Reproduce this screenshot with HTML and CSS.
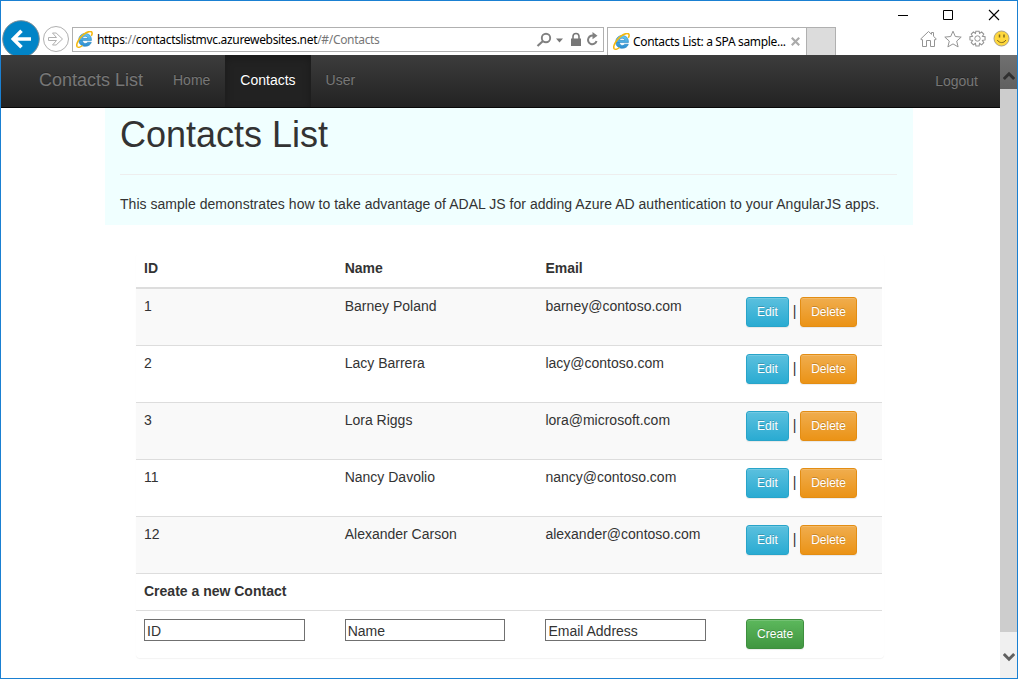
FILE: index.html
```html
<!DOCTYPE html>
<html lang="en">
<head>
<meta charset="utf-8">
<title>Contacts List: a SPA sample</title>
<link rel="stylesheet" href="styles.css">
</head>
<body>
<svg width="0" height="0" class="defs">
  <defs>
    <linearGradient id="ieBlue" x1="0" y1="0" x2="0" y2="1"><stop offset="0" stop-color="#69c9f2"/><stop offset="1" stop-color="#2b8bd0"/></linearGradient>
    <symbol id="ie" viewBox="0 0 16 16">
      <path d="M2.600 9h11.900c.3-4.200-2.200-6.600-5.800-6.600-3.600 0-6.100 2.500-6.100 6.100 0 3.700 2.600 5.900 6.100 5.900 2.900 0 5-1.400 5.700-3.800h-3.500c-.5.8-1.200 1.100-2.100 1.100-1.500 0-2.700-1-2.700-2.700M6.100 6.900c.2-1.300 1.200-2 2.500-2s2.400.7 2.500 2z" fill="url(#ieBlue)" fill-rule="evenodd" stroke="#2a87c2" stroke-width=".6"/>
      <path d="M1.300 14.900C-.7 12.800 3 6.500 7.200 3.200 10.600.5 14.300-.4 15 1.300c.4.900.1 2.100-.6 3.300" fill="none" stroke="#f4b80f" stroke-width="1.500"/>
      <path d="M1.300 14.900c1 .9 3.200.1 4.800-1.200" fill="none" stroke="#f4b80f" stroke-width="1.300"/>
    </symbol>
  </defs>
</svg>
<div class="window">
  <header class="chrome">
    <svg class="back" width="40" height="36" viewBox="0 0 40 36"><circle cx="20" cy="20" r="18.300" fill="#0184c7" stroke="#7d8d96"/><path d="M30 20H13M20.500 11.800L12.300 20l8.200 8.200" fill="none" stroke="#fff" stroke-width="3.600"/></svg>
    <svg class="forward" width="28" height="28" viewBox="0 0 28 28"><circle cx="14" cy="14" r="12.500" fill="#fff" stroke="#b0b0b0"/><path d="M6.500 12.500h8L10.500 8h3.600L20.500 14l-6.400 6h-3.600l4-4.500h-8z" fill="none" stroke="#b0b0b0"/></svg>
    <div class="address">
      <svg width="17" height="17"><use href="#ie"/></svg>
      <span class="url">https<i>://</i>contactslistmvc.azurewebsites.net<i>/#/Contacts</i></span>
      <svg class="tools" width="64" height="20" viewBox="0 0 64 20"><circle cx="10" cy="8" r="4.200" fill="none" stroke="#808080" stroke-width="1.900"/><path d="M7 11l-5.500 5" stroke="#808080" stroke-width="2.200"/><path d="M20 8.500h7l-3.500 4z" fill="#777"/><path d="M35 8.500h10v7.500H35z" fill="#777"/><path d="M37 9V6.500a3 3 0 0 1 6 0V9" fill="none" stroke="#777" stroke-width="1.600"/><path d="M58.500 6.200a4.300 4.300 0 1 0 2 4.800" fill="none" stroke="#808080" stroke-width="2"/><path d="M56.500 2l5 3.800-5 3.500z" fill="#808080"/></svg>
    </div>
    <div class="tab">
      <svg width="17" height="17"><use href="#ie"/></svg>
      <span class="tab-title">Contacts List: a SPA sample...</span>
      <svg class="tab-close" width="9" height="9" viewBox="0 0 9 9"><path d="M.8.800l7.400 7.400M8.200.800L.8 8.200" stroke="#aaa" stroke-width="2.200"/></svg>
    </div>
    <div class="new-tab"></div>
    <div class="corner">
      <svg class="controls" width="102" height="12" viewBox="0 0 102 12"><path d="M0 6.500h10M45.500 1.500h9v9h-9z" fill="none" stroke="#000"/><path d="M91 1l10 10M101 1L91 11" stroke="#000" stroke-width="1.100"/></svg>
      <svg class="icons" width="90" height="18" viewBox="0 0 90 18" fill="none" stroke="#949494"><path d="M.7 9L8.500 1.500 11.500 4.300V2.500h2v3.800L16.300 9l-1.300 1-.5-.3v6.800h-4v-6h-4v6h-4V9.700l-.5.3z"/><path d="M33 1.200l2.300 5.300 5.900.6-4.500 4 1.400 5.800-5.100-3-5.100 3 1.400-5.800-4.500-4 5.900-.6z"/><path transform="translate(57.500 8.500) scale(1.080) translate(-57 -8.200)" d="M55.500 1.500h3l.4 2 1.900-1.300 2 2-1.200 1.900 2.400.4v3l-2.400.5 1.200 2-2 2-1.900-1.200-.4 2.300h-3l-.4-2.300-1.900 1.200-2-2 1.200-2-2.400-.5v-3l2.400-.4-1.200-1.900 2-2 1.900 1.300z"/><circle cx="57.500" cy="8.500" r="2.700"/><circle cx="81.500" cy="8.500" r="7.500" fill="#ffd83d" stroke="#a9a08a"/><path d="M79.500 4.500v3M84 4.500v3" stroke="#806818" stroke-width="1.500"/><path d="M77.300 10c1.800 3.400 6.800 3.400 8.600 0" stroke="#806818"/></svg>
    </div>
  </header>
  <div class="viewport">
    <main class="page">
      <nav class="navbar">
        <a class="brand">Contacts List</a><a class="link">Home</a><a class="link active">Contacts</a><a class="link">User</a><a class="link logout">Logout</a>
      </nav>
      <section class="intro">
        <h1>Contacts List</h1>
        <hr>
        <p>This sample demonstrates how to take advantage of ADAL JS for adding Azure AD authentication to your AngularJS apps.</p>
      </section>
      <section class="panel">
        <table class="contacts">
          <thead><tr><th>ID</th><th>Name</th><th>Email</th><th></th></tr></thead>
          <tbody>
            <tr class="row"><td>1</td><td>Barney Poland</td><td>barney@contoso.com</td><td><button class="btn info">Edit</button> | <button class="btn warning">Delete</button></td></tr>
            <tr class="row"><td>2</td><td>Lacy Barrera</td><td>lacy@contoso.com</td><td><button class="btn info">Edit</button> | <button class="btn warning">Delete</button></td></tr>
            <tr class="row"><td>3</td><td>Lora Riggs</td><td>lora@microsoft.com</td><td><button class="btn info">Edit</button> | <button class="btn warning">Delete</button></td></tr>
            <tr class="row"><td>11</td><td>Nancy Davolio</td><td>nancy@contoso.com</td><td><button class="btn info">Edit</button> | <button class="btn warning">Delete</button></td></tr>
            <tr class="row"><td>12</td><td>Alexander Carson</td><td>alexander@contoso.com</td><td><button class="btn info">Edit</button> | <button class="btn warning">Delete</button></td></tr>
            <tr><th colspan="4">Create a new Contact</th></tr>
            <tr class="create"><td><input placeholder="ID"></td><td><input class="name" placeholder="Name"></td><td><input placeholder="Email Address"></td><td><button class="btn success">Create</button></td></tr>
          </tbody>
        </table>
      </section>
    </main>
    <aside class="scrollbar">
      <div class="up"><svg width="12" height="10" viewBox="0 0 12 10"><path d="M.8 8L6 2.800 11.200 8" fill="none" stroke="#303030" stroke-width="3"/></svg></div>
      <div class="thumb"></div>
      <div class="down"><svg width="12" height="10" viewBox="0 0 12 10"><path d="M.8 2L6 7.200 11.200 2" fill="none" stroke="#606060" stroke-width="3"/></svg></div>
    </aside>
  </div>
</div>
</body>
</html>
```
FILE: styles.css
```css
* { box-sizing: border-box; }
body { margin: 0; font: 14px/20px "Liberation Sans", Arial, sans-serif; color: #333; overflow: hidden; }
.defs { display: block; position: absolute; }
svg { display: block; flex: none; }
.window { width: 1018px; height: 679px; border: 1px solid #1a80d2; background: #fff; display: flex; flex-direction: column; }

.chrome { height: 54px; flex: none; display: flex; align-items: flex-start; font: 12px/16px "Noto Sans", "Open Sans", sans-serif; overflow: hidden; }
.back { margin-top: 18px; }
.forward { margin: 24px 0 0 1px; }
.address { width: 532px; height: 25px; margin: 26px 0 0 2px; border: 1px solid #b0b0b0; display: flex; align-items: center; padding-left: 3px; }
.url { color: #000; font-size: 12px; letter-spacing: -0.320px; margin-left: 4px; padding-top: 1px; white-space: nowrap; }
.url i { font-style: normal; color: #777; }
.tools { margin-left: auto; margin-right: 3px; }
.tab { width: 199px; height: 28px; margin: 26px 0 0 3px; border: 1px solid #b0b0b0; border-width: 1px 0 0 1px; display: flex; align-items: center; padding-left: 5px; }
.tab-title { color: #000; margin-left: 3px; white-space: nowrap; width: 154px; letter-spacing: -0.330px; }
.tab-close { margin-left: 4px; }
.new-tab { width: 30px; height: 28px; margin-top: 26px; background: #dcdcdc; border: 1px solid #b0b0b0; border-bottom: 0; }
.corner { width: 181px; height: 54px; padding-top: 8px; display: flex; flex-direction: column; }
.controls { margin-left: 62px; }
.icons { margin: 9px 0 0 84px; }

.viewport { flex: 1; display: flex; min-height: 0; }
.page { width: 999px; overflow: hidden; }
.navbar { height: 53px; display: flex; padding-left: 38px; background: linear-gradient(#3c3c3c, #222); border-bottom: 1px solid #080808; text-shadow: 0 -1px 0 rgba(0,0,0,.25); }
.brand { font-size: 18px; color: #777; width: 119px; line-height: 50px; }
.link { color: #777; line-height: 50px; padding: 0 15px; }
.active { background: #222; color: #fff; box-shadow: inset 0 3px 9px rgba(0,0,0,.25); }
.logout { margin-left: auto; padding-right: 22px; line-height: 52px; }

.intro { width: 808px; height: 117px; margin-left: 104px; padding: 7px 16px 0 15px; background: #f0ffff; }
h1 { font-size: 36px; line-height: 40px; font-weight: 400; margin: 0; }
hr { border: 0; border-top: 1px solid #eee; margin: 19px 0; }
p { margin: 0; white-space: nowrap; letter-spacing: 0.030px; }

.panel { width: 748px; height: 405px; margin: 28px 0 0 135px; padding-right: 2px; border-radius: 4px; box-shadow: 0 1px 1px rgba(0,0,0,.05); }
.contacts { width: 746px; table-layout: fixed; border-collapse: separate; border-spacing: 0; }
th, td { padding: 7px 8px 8px; text-align: left; vertical-align: top; }
th:nth-child(-n+3) { width: 200.700px; }
thead th { height: 36px; padding: 5px 8px 6px; border-bottom: 2px solid #ddd; }
.contacts thead th:last-child { width: auto; }
tbody th, tbody td { border-bottom: 1px solid #ddd; height: 57px; }
tbody th { height: 37px; }
.row:nth-child(odd) { background: #f9f9f9; }
.create td { border-bottom: 0; height: 47px; padding-top: 8px; }
td:last-child { white-space: nowrap; padding-top: 8px; }
.btn { height: 30px; padding: 0 10px; font: 12px/18px "Liberation Sans", Arial, sans-serif; color: #fff; border: 1px solid; border-radius: 3px; text-shadow: 0 -1px 0 rgba(0,0,0,.2); box-shadow: inset 0 1px 0 rgba(255,255,255,.15), 0 1px 1px rgba(0,0,0,.075); }
.info { background: linear-gradient(#5bc0de, #2aabd2); border-color: #28a4c9; }
.warning { background: linear-gradient(#f0ad4e, #eb9316); border-color: #e38d13; }
.success { background: linear-gradient(#5cb85c, #419641); border-color: #3e8f3e; }
input { display: block; width: 161px; height: 22px; padding: 2px 2px 0; border: 1px solid #707070; background: #fff; font: 14px/18px "Liberation Sans", Arial, sans-serif; border-radius: 0; }
.name { width: 160px; }
input::placeholder { color: #333; opacity: 1; }

.scrollbar { width: 17px; display: flex; flex-direction: column; }
.up { height: 34px; background: linear-gradient(#707070, #606060); display: flex; justify-content: center; padding-top: 16px; }
.thumb { flex: 1; background: #cdcdcd; }
.down { height: 46px; background: #f0f0f0; display: flex; justify-content: center; padding-top: 20px; }
```
